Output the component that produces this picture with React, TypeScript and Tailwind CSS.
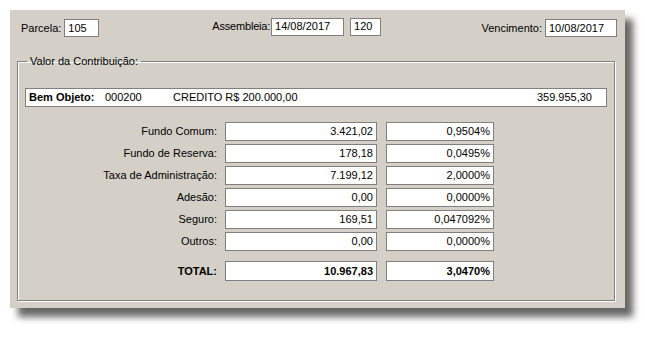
import React from 'react';

const rows = [
  { label: 'Fundo Comum:', value: '3.421,02', pct: '0,9504%' },
  { label: 'Fundo de Reserva:', value: '178,18', pct: '0,0495%' },
  { label: 'Taxa de Administração:', value: '7.199,12', pct: '2,0000%' },
  { label: 'Adesão:', value: '0,00', pct: '0,0000%' },
  { label: 'Seguro:', value: '169,51', pct: '0,047092%' },
  { label: 'Outros:', value: '0,00', pct: '0,0000%' },
];

const Field = ({ value, className }: { value: string; className: string }) => (
  <div
    className={`h-[18px] bg-white border border-[#7f7f7f] px-[3px] flex items-center leading-none ${className}`}
  >
    {value}
  </div>
);

const App = () => {
  return (
    <div className="min-h-screen bg-white pt-[10px] pl-[10px] font-['Liberation_Sans',Arial,sans-serif] text-[11px] text-black">
      <div className="w-[615px] h-[298px] bg-[#d4d0c8] shadow-[8px_9px_7px_rgba(0,0,0,0.6)] pt-[9px] pl-[11px] pr-[8px]">
        {/* Top row */}
        <div className="flex items-center h-[18px]">
          <div className="flex items-center">
            <span className="mr-[3px]">Parcela:</span>
            <Field value="105" className="w-[35px]" />
          </div>
          <div className="flex items-center ml-[113px] -mt-[3px]">
            <span className="mr-[1px] tracking-[-0.2px]">Assembleia:</span>
            <Field value="14/08/2017" className="w-[73px]" />
            <Field value="120" className="w-[31px] ml-[6px]" />
          </div>
          <div className="flex items-center ml-auto">
            <span className="mr-[3px]">Vencimento:</span>
            <Field value="10/08/2017" className="w-[72px]" />
          </div>
        </div>

        {/* Group box */}
        <fieldset className="mt-[18px] -ml-[4px] w-[598px] h-[246px] border border-[#808080] shadow-[1px_1px_0_#fff,inset_1px_1px_0_#fff] px-[7px]">
          <legend className="ml-[2px] px-[3px] leading-[13px]">Valor da Contribuição:</legend>

          <div className="mt-[20px] h-[19px] bg-white border border-[#7f7f7f] flex items-center pl-[3px] pr-[14px] leading-none">
            <span className="font-bold w-[76px]">Bem Objeto:</span>
            <span className="w-[68px]">000200</span>
            <span>CREDITO R$ 200.000,00</span>
            <span className="ml-auto">359.955,30</span>
          </div>

          <div className="mt-[15px] flex flex-col gap-[3px]">
            {rows.map((r) => (
              <div key={r.label} className="flex items-center">
                <span className="w-[192px] text-right">{r.label}</span>
                <Field value={r.value} className="w-[152px] ml-[8px] justify-end h-[19px]" />
                <Field value={r.pct} className="w-[108px] ml-[9px] justify-end h-[19px]" />
              </div>
            ))}
          </div>

          <div className="mt-[10px] flex items-center font-bold">
            <span className="w-[192px] text-right">TOTAL:</span>
            <Field value="10.967,83" className="w-[152px] ml-[8px] justify-end h-[20px]" />
            <Field value="3,0470%" className="w-[108px] ml-[9px] justify-end h-[20px]" />
          </div>
        </fieldset>
      </div>
    </div>
  );
};

export default App;
